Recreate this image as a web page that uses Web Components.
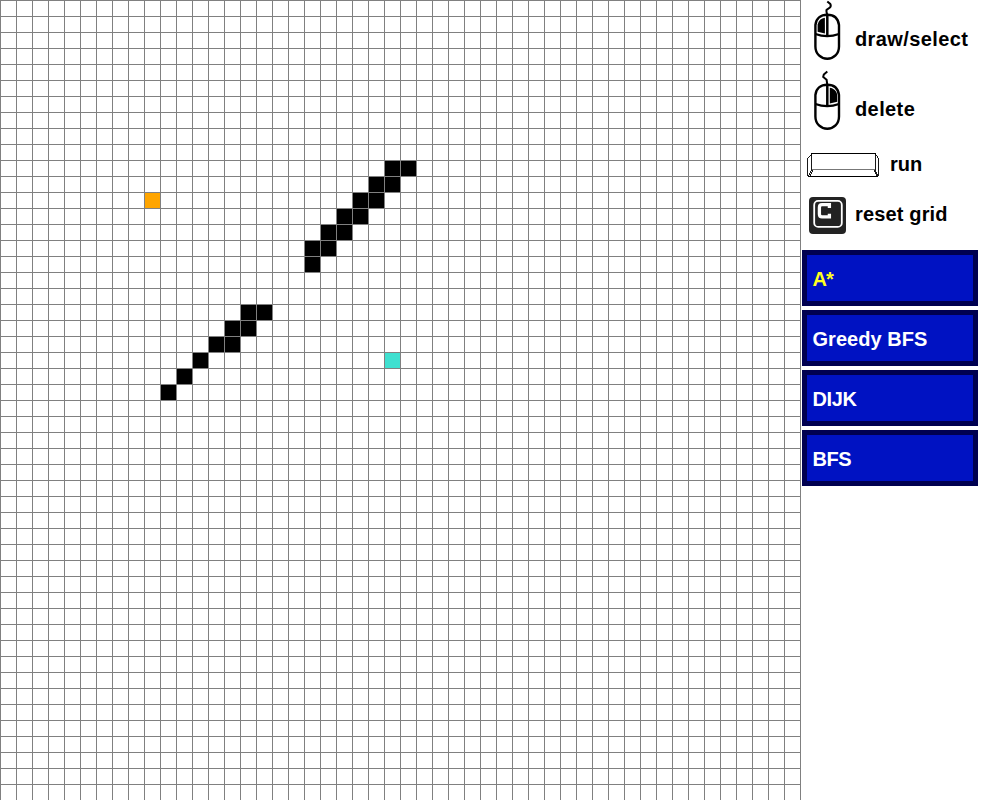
<!DOCTYPE html>
<html lang="en">
<head>
<meta charset="utf-8">
<title>Pathfinding</title>
<style>
html, body { margin: 0; height: 100%; overflow: hidden; background: #fff; }
</style>
</head>
<body>
<path-app></path-app>
<script>
class PathGrid extends HTMLElement {
  connectedCallback() {
    const walls = { 10: [24, 25], 11: [23, 24], 12: [22, 23], 13: [21, 22], 14: [20, 21], 15: [19, 20], 16: [19],
      19: [15, 16], 20: [14, 15], 21: [13, 14], 22: [12], 23: [11], 24: [10] };
    const cell = (c, r, k) => `<i class="${k}" style="grid-area:${r + 1}/${c + 1}"></i>`;
    let cells = cell(9, 12, 'start') + cell(24, 22, 'end');
    for (const r in walls) for (const c of walls[r]) cells += cell(c, +r, 'wall');
    this.attachShadow({ mode: 'open' }).innerHTML = `<style>
      :host { display: grid; width: 801px; height: 800px; flex: none;
        grid-template: repeat(50, 16px) / repeat(50, 16px);
        background: linear-gradient(90deg, #808080 1px, transparent 1px) 0 0 / 16px 16px,
                    linear-gradient(#808080 1px, transparent 1px) 0 0 / 16px 16px, #fff; }
      i { margin: 1px 0 0 1px; }
      .wall { background: #000; } .start { background: #ffa500; } .end { background: #40e0d0; }
    </style>${cells}`;
  }
}
customElements.define('path-grid', PathGrid);

const mouse = (tail, fill) => `<svg width="28" height="61" viewBox="0.4 0 28 61" fill="none" stroke="#000" stroke-width="2">
  <path d="${tail}"/>
  <path d="${fill}" fill="#000" stroke="none"/>
  <path d="M2.8 25C3.5 18.5 8 14.8 14.7 14.8S25.5 18.5 26.4 25V46.5C26.4 54 21 58.8 14.7 58.8S2.8 54 2.8 46.5Z" stroke-width="2.4"/>
  <path d="M2.8 34Q14.5 38.3 26.4 34" stroke-width="2.2"/><path d="M14.7 14V36.5" stroke-width="2.5"/></svg>`;
const icons = {
  left: mouse('M14.7 1.5L17.7 4Q18.8 6 17.3 7.5L13.9 10Q13.5 11 14.7 15', 'M12.3 17.8V33.4L5 31.8V24.5C6 20.5 8.5 18.2 12.3 17.8Z'),
  right: mouse('M14.7 1.5L11.2 4.5L10.6 7L14 9.8L14.7 15', 'M17.2 17.8C21 18.5 24 21 24.6 25V31.8L17.2 33.4Z'),
  space: `<svg width="74" height="26" viewBox="0 0 74 26" fill="none" stroke="#000" shape-rendering="crispEdges">
    <path d="M5 17.5H68" stroke="#777"/>
    <path d="M4 1.5H69"/><path d="M1 24.5H71"/>
    <path d="M4.5 2V17.5L.5 24M68.5 2V17.5L71.5 24M4.5 2L.5 6.5V24M68.5 2L71.5 6.5V24M6 18L3 24M67 18L70 24" stroke-width=".9"/></svg>`,
  key: `<svg width="37" height="37" viewBox="0 0 37 37" fill="none">
    <rect width="37" height="37" rx="4" fill="#232323"/>
    <rect x="5.2" y="3.9" width="27.6" height="26" rx="4" stroke="#fff" stroke-width="1.8"/>
    <path d="M20.4 11V7.7H13Q10.4 7.7 10.4 10.5V17Q10.4 19.9 13 19.9H20.4V16.8" stroke="#fff" stroke-width="3.3"/></svg>`
};

class HelpRow extends HTMLElement {
  connectedCallback() {
    this.attachShadow({ mode: 'open' }).innerHTML = `<style>
      :host { display: flex; align-items: flex-start; box-sizing: border-box; color: #000; }
      svg { display: block; flex: none; }
      span { white-space: pre; line-height: 24px; }
    </style>${icons[this.getAttribute('icon')]}<span><slot></slot></span>`;
    const span = this.shadowRoot.querySelector('span');
    span.style.margin = this.getAttribute('gap');
  }
}
customElements.define('help-row', HelpRow);

class AlgoButton extends HTMLElement {
  connectedCallback() {
    this.attachShadow({ mode: 'open' }).innerHTML = `<style>
      :host { display: flex; align-items: center; box-sizing: border-box; width: 176px; height: 56px;
        border: 5px solid #000050; background: #0012c2; color: #fff; padding: 0 0 0 5.5px; white-space: pre; }
      :host([selected]) { color: #ffff20; }
      span { line-height: 24px; padding-top: 1px; }
    </style><span><slot></slot></span>`;
  }
}
customElements.define('algo-button', AlgoButton);

class PathApp extends HTMLElement {
  connectedCallback() {
    this.attachShadow({ mode: 'open' }).innerHTML = `<style>
      :host { display: flex; width: 992px; height: 800px; background: #fff; font: bold 20px "Liberation Sans", Arial, sans-serif; }
      aside { width: 191px; }
      .help { display: grid; grid-template-rows: 70px 80px 45px 55px; }
      .m { padding-left: 12px; } .s { padding: 2px 0 0 6px; } .k { padding: 2px 0 0 8px; }
      nav { display: grid; gap: 4px; padding-left: 1px; }
      .a { letter-spacing: .4px; } .b { letter-spacing: .05px; } .c { letter-spacing: .15px; }
      .d { letter-spacing: -.4px; } .e { letter-spacing: -1px; }
    </style>
    <path-grid></path-grid>
    <aside>
      <div class="help">
        <help-row class="m a" icon="left" gap="27px 0 0 14px">draw/select</help-row>
        <help-row class="m a" icon="right" gap="27px 0 0 14px">delete</help-row>
        <help-row class="s b" icon="space" gap="0 0 0 9px">run</help-row>
        <help-row class="k c" icon="key" gap="5px 0 0 9px">reset grid</help-row>
      </div>
      <nav>
        <algo-button class="e" selected>A*</algo-button>
        <algo-button class="b">Greedy BFS</algo-button>
        <algo-button class="d">DIJK</algo-button>
        <algo-button class="d">BFS</algo-button>
      </nav>
    </aside>`;
  }
}
customElements.define('path-app', PathApp);
</script>
</body>
</html>
